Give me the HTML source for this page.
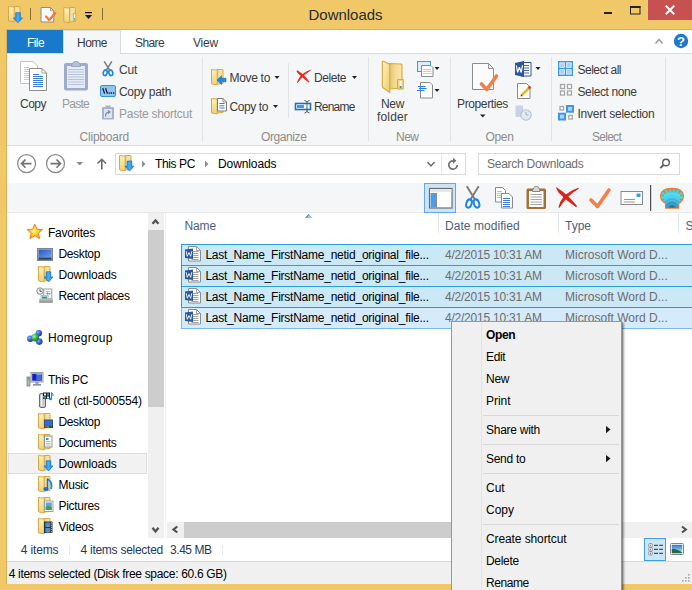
<!DOCTYPE html>
<html><head><meta charset="utf-8">
<style>
html,body{margin:0;padding:0;}
body{width:692px;height:590px;overflow:hidden;position:relative;background:#fff;font-family:"Liberation Sans",sans-serif;}
.a{position:absolute;}
.t{position:absolute;white-space:nowrap;font-family:"Liberation Sans",sans-serif;}
svg{position:absolute;overflow:visible;}
</style></head><body>
<!-- frame -->
<div class="a" style="left:0;top:0;width:692px;height:30px;background:#f0c868;"></div>
<div class="a" style="left:0;top:0;width:7px;height:590px;background:#f0c868;"></div>
<div class="a" style="left:0;top:583px;width:692px;height:7px;background:#f0c868;"></div>
<div class="a" style="left:6px;top:29px;width:686px;height:1px;background:#d9b158;"></div>
<div class="a" style="left:6px;top:29px;width:1px;height:555px;background:#d9b158;"></div>
<div class="a" style="left:6px;top:583px;width:686px;height:1px;background:#d9b158;"></div>
<!-- close button -->
<div class="a" style="left:648px;top:0;width:44px;height:20px;background:#c75050;"></div>
<!-- tab row -->
<div class="a" style="left:7px;top:30px;width:685px;height:23px;background:#fff;"></div>
<div class="a" style="left:7px;top:30px;width:56px;height:23px;background:#1979ca;"></div>
<div class="a" style="left:63px;top:30px;width:56px;height:24px;background:#f5f6f7;border:1px solid #dadbdc;border-bottom:none;"></div>
<!-- ribbon body -->
<div class="a" style="left:7px;top:53px;width:685px;height:91px;background:#f5f6f7;border-top:1px solid #dadbdc;border-bottom:1px solid #dadbdc;"></div>
<div class="a" style="left:64px;top:53px;width:56px;height:2px;background:#f5f6f7;"></div>
<!-- group separators -->
<div class="a" style="left:202px;top:57px;width:1px;height:84px;background:#e2e3e4;"></div>
<div class="a" style="left:288px;top:63px;width:1px;height:55px;background:#e2e3e4;"></div>
<div class="a" style="left:368px;top:57px;width:1px;height:84px;background:#e2e3e4;"></div>
<div class="a" style="left:450px;top:57px;width:1px;height:84px;background:#e2e3e4;"></div>
<div class="a" style="left:551px;top:57px;width:1px;height:84px;background:#e2e3e4;"></div>
<div class="a" style="left:665px;top:57px;width:1px;height:84px;background:#e2e3e4;"></div>
<!-- address row -->
<div class="a" style="left:7px;top:146px;width:685px;height:37px;background:#fff;"></div>
<div class="a" style="left:115px;top:153px;width:349px;height:20px;border:1px solid #d9d9d9;background:#fff;"></div>
<div class="a" style="left:441px;top:154px;width:1px;height:20px;background:#e5e5e5;"></div>
<div class="a" style="left:478px;top:153px;width:200px;height:20px;border:1px solid #d9d9d9;background:#fff;"></div>
<!-- toolbar row -->
<div class="a" style="left:7px;top:183px;width:685px;height:29px;background:#f5f6f7;border-bottom:1px solid #e8e9ea;"></div>
<div class="a" style="left:424px;top:183px;width:30px;height:28px;background:#cde4f7;border:1px solid #66a7e8;"></div>
<div class="a" style="left:650px;top:187px;width:1px;height:22px;background:#a0a0a0;"></div>
<!-- nav pane scrollbar -->
<div class="a" style="left:148px;top:213px;width:16px;height:325px;background:#f0f0f0;"></div>
<div class="a" style="left:148px;top:230px;width:16px;height:177px;background:#cdcdcd;"></div>
<div class="a" style="left:165px;top:213px;width:1px;height:325px;background:#f0f0f0;"></div>
<!-- nav hover row -->
<div class="a" style="left:8px;top:453px;width:137px;height:19px;background:#f2f2f2;border:1px solid #dedede;"></div>
<!-- header column lines -->
<div class="a" style="left:438px;top:213px;width:1px;height:23px;background:linear-gradient(#dfe6ee,#dfe6ee 70%,#fff);"></div>
<div class="a" style="left:558px;top:213px;width:1px;height:23px;background:linear-gradient(#dfe6ee,#dfe6ee 70%,#fff);"></div>
<div class="a" style="left:678px;top:213px;width:1px;height:23px;background:linear-gradient(#dfe6ee,#dfe6ee 70%,#fff);"></div>
<!-- selected rows -->
<div class="a" style="left:181px;top:244px;width:520px;height:20px;background:#cbe8f6;border:1px solid #26a0da;"></div>
<div class="a" style="left:181px;top:265px;width:520px;height:20px;background:#cbe8f6;border:1px solid #26a0da;"></div>
<div class="a" style="left:181px;top:286px;width:520px;height:20px;background:#cbe8f6;border:1px solid #26a0da;"></div>
<div class="a" style="left:181px;top:307px;width:520px;height:20px;background:#d5eafa;border:1px solid #7db8ea;border-top-color:#26a0da;"></div>
<!-- horizontal scrollbar -->
<div class="a" style="left:167px;top:522px;width:525px;height:16px;background:#f0f0f0;"></div>
<div class="a" style="left:184px;top:522px;width:438px;height:16px;background:#cdcdcd;"></div>
<!-- status bars -->
<div class="a" style="left:69px;top:545px;width:1px;height:10px;background:#e5e5e5;"></div>
<div class="a" style="left:222px;top:545px;width:1px;height:10px;background:#e5e5e5;"></div>
<div class="a" style="left:644px;top:538px;width:20px;height:21px;background:#cde6f7;border:1px solid #3fa0e0;"></div>
<div class="a" style="left:7px;top:561px;width:685px;height:22px;background:#f0f0f0;border-top:1px solid #d7d7d7;"></div>
<svg width="692" height="590" viewBox="0 0 692 590" style="left:0;top:0;">
<defs>
  <linearGradient id="fy" x1="0" y1="0" x2="0" y2="1">
    <stop offset="0" stop-color="#fcf2b8"/><stop offset="1" stop-color="#eed27c"/>
  </linearGradient>
  <linearGradient id="fb" x1="0" y1="0" x2="1" y2="0">
    <stop offset="0" stop-color="#dcc47a"/><stop offset="0.4" stop-color="#f2e2a4"/><stop offset="1" stop-color="#f4e2a0"/>
  </linearGradient>
  <symbol id="f16" viewBox="0 0 16 16" width="16" height="16" overflow="visible">
    <path d="M6.8 0.5 H12.5 Q13 0.5 13 1 V14.5 L6.8 15 Z" fill="url(#fb)" stroke="#d9a844" stroke-width="1"/>
    <path d="M1.5 0.5 L6.6 1.1 Q7.2 1.2 7.2 1.7 V15.8 L1.7 15 Q1.5 14.9 1.5 14.4 Z" fill="url(#fy)" stroke="#d9a844" stroke-width="1"/>
  </symbol>
  <linearGradient id="ar" x1="0" y1="0" x2="1" y2="0">
    <stop offset="0" stop-color="#1a78dc"/><stop offset="0.5" stop-color="#3fb2f6"/><stop offset="1" stop-color="#1a78dc"/>
  </linearGradient>
  <symbol id="dl" viewBox="0 0 10 10" width="10" height="10" overflow="visible">
    <path d="M2.2 0.2 H6.8 V5.4 H9 L4.5 10.3 L0 5.4 H2.2 Z" fill="url(#ar)" stroke="#1670d0" stroke-width="0.7" stroke-linejoin="round"/>
  </symbol>
  <radialGradient id="star" cx="0.45" cy="0.45" r="0.6">
    <stop offset="0" stop-color="#fff3a0"/><stop offset="0.45" stop-color="#ffd02a"/><stop offset="1" stop-color="#f59020"/>
  </radialGradient>
  <linearGradient id="scr" x1="0" y1="0" x2="1" y2="1">
    <stop offset="0" stop-color="#2a58c0"/><stop offset="1" stop-color="#6c9ce8"/>
  </linearGradient>
</defs>

<!-- ===== quick access toolbar ===== -->
<use href="#f16" x="7" y="6"/>
<use href="#dl" x="13.5" y="12.5"/>
<rect x="30" y="8" width="1" height="12" fill="#8a6f3a"/>
<path d="M41 7.5 H50.5 L53.8 10.8 V22 H41 Z" fill="#fbfbfb" stroke="#8a8a8a" stroke-width="1"/>
<path d="M50.5 7.5 V10.8 H53.8" fill="none" stroke="#8a8a8a" stroke-width="0.8"/>
<path d="M46 16.5 L49.3 20 L55.2 13" fill="none" stroke="#f07a40" stroke-width="2.4" stroke-linecap="round" stroke-linejoin="round"/>
<use href="#f16" x="62.3" y="7"/>
<rect x="73.3" y="13.5" width="2.6" height="7" fill="#f1d684" stroke="#d9a844" stroke-width="0.8"/>
<rect x="74.1" y="14.5" width="1" height="5" fill="#fff"/><rect x="74.1" y="18" width="1" height="1.6" fill="#3a9ae8"/>
<rect x="85" y="12" width="7" height="1.2" fill="#111"/>
<path d="M85 15 H92 L88.5 19 Z" fill="#111"/>
<rect x="102" y="8" width="1" height="12" fill="#8a6f3a"/>

<!-- window controls -->
<rect x="604" y="12" width="8" height="2" fill="#222"/>
<rect x="630.5" y="6.5" width="9.5" height="7.5" fill="none" stroke="#222" stroke-width="1"/>
<rect x="630" y="6" width="10.5" height="2" fill="#222"/>
<path d="M665.8 5.8 L674.2 14.2 M674.2 5.8 L665.8 14.2" stroke="#fff" stroke-width="2"/>
<!-- ribbon caret + help -->
<path d="M655.5 43.5 L659 39.5 L662.5 43.5" fill="none" stroke="#a0a0a0" stroke-width="1.6"/>
<circle cx="681" cy="41" r="7.2" fill="#1c78d0"/>
<text x="681" y="45.8" text-anchor="middle" font-family="Liberation Sans" font-weight="bold" font-size="13" fill="#fff">?</text>

<!-- ===== clipboard group ===== -->
<path d="M20.5 61.5 H33 L37.5 66 V83.5 H20.5 Z" fill="#fff" stroke="#c4c4c4" stroke-width="1"/>
<path d="M24 67.5 H29 M24 69.5 H31 M24 71.5 H31 M24 73.5 H31 M24 75.5 H31 M24 77.5 H31 M24 79.5 H31" stroke="#b9d0ec" stroke-width="1"/>
<path d="M29.5 68.5 H42 L46.5 73 V90.5 H29.5 Z" fill="#fff" stroke="#8c8c8c" stroke-width="1"/>
<path d="M42 68.5 V73 H46.5" fill="none" stroke="#8c8c8c" stroke-width="0.8"/>
<path d="M33 74.5 H39 M33 76.5 H43 M33 78.5 H43 M33 80.5 H43 M33 82.5 H43 M33 84.5 H43 M33 86.5 H43" stroke="#3a7bd5" stroke-width="1.1"/>
<rect x="64" y="63" width="24" height="27.5" rx="2" fill="#9eabc9"/>
<rect x="67" y="66" width="18" height="22" fill="#e6ecf7"/>
<path d="M68 69.5 H84 M68 72 H84 M68 74.5 H84 M68 77 H84 M68 79.5 H84 M68 82 H84 M68 84.5 H84" stroke="#b8c4dc" stroke-width="1"/>
<path d="M71.5 66.5 Q72 61.5 76 61.5 Q80 61.5 80.5 66.5 Z" fill="#b6c1d8" stroke="#8e9bb8" stroke-width="0.8"/>
<!-- scissors -->
<path d="M104.2 61.3 L109.6 70.2 M111.8 61.3 L106.4 70.2" stroke="#7a7a7a" stroke-width="1.5"/>
<ellipse cx="105.2" cy="72.8" rx="1.9" ry="2.9" fill="none" stroke="#1c86e0" stroke-width="1.6" transform="rotate(15 105.2 72.8)"/>
<ellipse cx="110.8" cy="72.8" rx="1.9" ry="2.9" fill="none" stroke="#1c86e0" stroke-width="1.6" transform="rotate(-15 110.8 72.8)"/>
<!-- copy path -->
<rect x="100.5" y="85.5" width="15" height="11" rx="1.5" fill="#8fc5f5" stroke="#3a8ee0" stroke-width="1"/>
<path d="M102.8 88.3 L104.6 93.6 M105.6 88.3 L107.4 93.6" stroke="#111" stroke-width="1.2"/>
<path d="M108.6 93 H109.8 M110.8 93 H112 M113 93 H114.2" stroke="#111" stroke-width="1.4"/>
<!-- paste shortcut -->
<rect x="102" y="107" width="12" height="12.5" rx="1" fill="#a9b4ca"/>
<rect x="104" y="109" width="8" height="9" fill="#dfe5f0"/>
<rect x="105.5" y="105.5" width="5" height="2.5" fill="#a9b4ca"/>
<path d="M105.5 116.5 Q105.5 112 109.5 112 M108 110.5 L110 112 L108 113.5" fill="none" stroke="#7c8aa8" stroke-width="1.2"/>

<!-- ===== organize ===== -->
<use href="#f16" x="210" y="69" />
<path d="M217 80 L221.5 75.8 V78.3 H226 V81.8 H221.5 V84.5 Z" fill="#1e8ae6" stroke="#0f6cc0" stroke-width="0.6"/>
<use href="#f16" x="210" y="98" />
<path d="M217.5 98.5 H223 L226.5 102 V111 H217.5 Z" fill="#fff" stroke="#7a7a7a" stroke-width="1"/>
<path d="M223 98.5 V102 H226.5" fill="none" stroke="#7a7a7a" stroke-width="0.8"/>
<path d="M219.5 103.5 H224.5 M219.5 105.8 H224.5 M219.5 108 H224.5" stroke="#3a7bd5" stroke-width="1"/>
<path d="M274.5 76 H279.5 L277 79 Z" fill="#222"/>
<path d="M273 105 H278 L275.5 108 Z" fill="#222"/>
<path d="M310.3 70.2 Q303 74.5 297.5 82.5 Q298.5 79 301 76 Q305 72 310.3 70.2 Z" fill="#e0302a" stroke="#e0302a" stroke-width="1"/>
<path d="M297 70.8 Q303.5 74.5 309 82 Q303 77.5 298.5 73 Z" fill="#e0302a" stroke="#e0302a" stroke-width="1.2"/>
<path d="M352 76 H357 L354.5 79 Z" fill="#222"/>
<rect x="295.5" y="103.5" width="15" height="6" fill="#fff" stroke="#1e6ec0" stroke-width="1.6"/>
<rect x="297" y="105" width="7" height="3" fill="#3a9ae8"/>
<path d="M304.5 100.5 Q307 101 307 102.5 V111 Q307 112.5 304.5 113 M309.5 100.5 Q307 101 307 102.5 M307 111 Q307 112.5 309.5 113" fill="none" stroke="#5a5a5a" stroke-width="1"/>

<!-- ===== new ===== -->
<defs><linearGradient id="nfb" x1="0" y1="0" x2="1" y2="0"><stop offset="0" stop-color="#e2c470"/><stop offset="0.5" stop-color="#f2dc96"/><stop offset="1" stop-color="#f8e8aa"/></linearGradient>
<linearGradient id="nff" x1="0" y1="0" x2="1" y2="1"><stop offset="0" stop-color="#fdf3bc"/><stop offset="1" stop-color="#eccc70"/></linearGradient></defs>
<path d="M389 63.5 L401 64 Q402 64.2 402 65.2 V88 L389 89 Z" fill="url(#nfb)" stroke="#dca53a" stroke-width="1.1"/>
<path d="M397.5 79.5 H403.3 V89 H397.5 Z" fill="#f1d684" stroke="#dca53a" stroke-width="1"/>
<rect x="399.6" y="81" width="2" height="7" fill="#fafafa"/>
<rect x="399.6" y="86" width="2" height="2.2" fill="#3a8ee0"/>
<path d="M382.3 62 Q382.5 61 383.5 61.3 L389.2 64 Q389.8 64.3 389.8 65 V92.5 L382.8 87.5 Q382.3 87.2 382.3 86.5 Z" fill="url(#nff)" stroke="#dca53a" stroke-width="1.1"/>
<!-- new item -->
<rect x="417.5" y="61.5" width="13" height="10" fill="#dcecfb" stroke="#3a9ae8" stroke-width="1"/>
<path d="M421.5 65.5 H431 L433 67.5 V76.5 H421.5 Z" fill="#fff" stroke="#8a8a8a" stroke-width="1"/>
<path d="M423 69.5 H431.5 M423 71.5 H431.5 M423 73.5 H431.5" stroke="#b8cce4" stroke-width="0.9"/>
<path d="M434.5 67 H439.5 L437 70 Z" fill="#222"/>
<!-- easy access -->
<path d="M420.5 82.5 H430 L432.5 85 V98 H420.5 Z" fill="#fff" stroke="#8a8a8a" stroke-width="1"/>
<path d="M418 86.5 H425.5 M419 88.5 H426.5 M417 90.5 H424.5" stroke="#2a7de0" stroke-width="1.1"/>
<path d="M434.5 89 H439.5 L437 92 Z" fill="#222"/>

<!-- ===== open ===== -->
<path d="M472.5 63.5 H488.5 L493.5 68.5 V89.5 H472.5 Z" fill="#fcfcfc" stroke="#8c8c8c" stroke-width="1"/>
<path d="M488.5 63.5 V68.5 H493.5" fill="none" stroke="#8c8c8c" stroke-width="0.9"/>
<path d="M481.5 84 L486.8 89.5 L496.5 76" fill="none" stroke="#f08048" stroke-width="3.6" stroke-linecap="round" stroke-linejoin="round"/>
<path d="M480 114.5 H485.5 L482.75 117.5 Z" fill="#222"/>
<!-- word -->
<path d="M521 62.5 H531 V76 H521 Z" fill="#fff" stroke="#2b579a" stroke-width="1"/>
<path d="M524 65.5 H529 M524 68 H529 M524 70.5 H529 M524 73 H529" stroke="#2b579a" stroke-width="0.9"/>
<path d="M515 63 L524 61 V77 L515 75 Z" fill="#2b579a"/>
<path d="M516.3 65.3 L517.6 72.5 L519.4 67.3 L521.2 72.5 L522.5 65.3" fill="none" stroke="#fff" stroke-width="1.2" stroke-linejoin="bevel"/>
<path d="M535.5 67 H540.5 L538 70 Z" fill="#222"/>
<!-- edit -->
<path d="M517.5 83.5 H526.5 L530 87 V98.5 H517.5 Z" fill="#fff" stroke="#8a8a8a" stroke-width="1"/>
<path d="M521 96 L529.5 87.5" stroke="#e8b820" stroke-width="2.6"/>
<path d="M528.5 86.5 L530.5 88.5" stroke="#d84040" stroke-width="2.6"/>
<path d="M520.5 96.5 L521.5 94.5 L522.5 95.5 Z" fill="#333"/>
<!-- history disabled -->
<path d="M515.5 105.5 H523 V117 H515.5 Z" fill="#c9d3e3"/>
<circle cx="526" cy="115" r="5.2" fill="#e4e9f2" stroke="#b2bfd3" stroke-width="1.1"/>
<path d="M526 111.8 V115 H528.5" fill="none" stroke="#9aaac4" stroke-width="1"/>

<!-- ===== select ===== -->
<rect x="558" y="61" width="15" height="15" fill="#3b98ea"/>
<rect x="559.8" y="62.8" width="4.6" height="4.6" fill="#a8d4f8" stroke="#e8f4fe" stroke-width="0.8"/>
<rect x="566.6" y="62.8" width="4.6" height="4.6" fill="#a8d4f8" stroke="#e8f4fe" stroke-width="0.8"/>
<rect x="559.8" y="69.6" width="4.6" height="4.6" fill="#a8d4f8" stroke="#e8f4fe" stroke-width="0.8"/>
<rect x="566.6" y="69.6" width="4.6" height="4.6" fill="#a8d4f8" stroke="#e8f4fe" stroke-width="0.8"/>
<rect x="560.5" y="84.5" width="4" height="4" fill="#fff" stroke="#a6a6a6" stroke-width="1.3"/>
<rect x="567.5" y="84.5" width="4" height="4" fill="#fff" stroke="#a6a6a6" stroke-width="1.3"/>
<rect x="560.5" y="91" width="4" height="4" fill="#fff" stroke="#a6a6a6" stroke-width="1.3"/>
<rect x="567.5" y="91" width="4" height="4" fill="#fff" stroke="#a6a6a6" stroke-width="1.3"/>
<rect x="560" y="106.5" width="3.5" height="3.5" fill="#fff" stroke="#a6a6a6" stroke-width="1.3"/>
<rect x="566" y="105" width="8" height="7.7" fill="#3b98ea"/>
<rect x="568" y="107" width="4" height="3.7" fill="#a8d4f8"/>
<rect x="558" y="112.7" width="8" height="7.8" fill="#3b98ea"/>
<rect x="560" y="114.7" width="4" height="3.8" fill="#a8d4f8"/>
<rect x="568.8" y="115.5" width="3.5" height="3.5" fill="#fff" stroke="#a6a6a6" stroke-width="1.3"/>

<!-- ===== address row ===== -->
<circle cx="26.6" cy="163.6" r="9" fill="none" stroke="#8c8c8c" stroke-width="1.3"/>
<path d="M21.5 163.6 H31.5 M25.5 159.5 L21.5 163.6 L25.5 167.7" fill="none" stroke="#707070" stroke-width="1.6"/>
<circle cx="55.5" cy="163.6" r="9" fill="none" stroke="#8c8c8c" stroke-width="1.3"/>
<path d="M50.5 163.6 H60.5 M56.5 159.5 L60.5 163.6 L56.5 167.7" fill="none" stroke="#707070" stroke-width="1.6"/>
<path d="M76.5 162 H83 L79.75 165.5 Z" fill="#8a8a8a"/>
<path d="M101.8 169.5 V159.5 M97.5 163.5 L101.8 159.3 L106 163.5" fill="none" stroke="#6a6a6a" stroke-width="1.6"/>
<use href="#f16" x="118" y="155"/>
<use href="#dl" x="125" y="160.8"/>
<path d="M142 160.5 L145.5 164 L142 167.5 Z" fill="#909090"/>
<path d="M205 160.5 L208.5 164 L205 167.5 Z" fill="#909090"/>
<path d="M427.5 162 L431 166 L434.5 162" fill="none" stroke="#6a6a6a" stroke-width="1.4"/>
<path d="M457.2 165 A4.2 4.2 0 1 1 453.2 160.8" fill="none" stroke="#707070" stroke-width="1.7"/>
<path d="M453 157.8 L456.4 160.8 L453 163.8 Z" fill="#707070"/>
<circle cx="666" cy="162.5" r="3.3" fill="none" stroke="#5a5a5a" stroke-width="1.4"/>
<path d="M663.5 165 L660.3 168.2" stroke="#5a5a5a" stroke-width="1.8"/>

<!-- ===== toolbar ===== -->
<rect x="429.5" y="188.5" width="22.5" height="19.5" fill="#fff" stroke="#6e6e6e" stroke-width="1.2"/>
<rect x="430" y="189" width="21.5" height="3" fill="#e8e8e8"/>
<rect x="430.5" y="193" width="5.5" height="14.5" fill="#4a9de8"/>
<path d="M436.5 193 V208" stroke="#8a8a8a" stroke-width="1"/>
<path d="M466.8 186.3 L475 199.5 M478.7 186.3 L470.5 199.5" stroke="#7a7a7a" stroke-width="1.9"/>
<ellipse cx="469" cy="203.5" rx="2.6" ry="4.2" fill="none" stroke="#1c86e0" stroke-width="2" transform="rotate(18 469 203.5)"/>
<ellipse cx="476.5" cy="203.5" rx="2.6" ry="4.2" fill="none" stroke="#1c86e0" stroke-width="2" transform="rotate(-18 476.5 203.5)"/>
<path d="M495.5 187.5 H502.5 L505.5 190.5 V202 H495.5 Z" fill="#fff" stroke="#8a8a8a" stroke-width="1"/>
<path d="M497 191.5 H502 M497 193.5 H502 M497 195.5 H502 M497 197.5 H502" stroke="#aac4e8" stroke-width="1"/>
<path d="M501.5 193.5 H509 L512.5 197 V208 H501.5 Z" fill="#fff" stroke="#8a8a8a" stroke-width="1"/>
<path d="M503 198.5 H510 M503 200.5 H510 M503 202.5 H510 M503 204.5 H510 M503 206.5 H510" stroke="#3a7bd5" stroke-width="1"/>
<rect x="526.5" y="188.5" width="19.5" height="20.5" rx="1.5" fill="#a56f36"/>
<rect x="529" y="191" width="14.5" height="16" fill="#fff"/>
<path d="M530.5 194.5 H542 M530.5 197 H542 M530.5 199.5 H542 M530.5 202 H542 M530.5 204.5 H542" stroke="#9a9a9a" stroke-width="0.9"/>
<path d="M532.5 191.5 Q533 186.5 536.25 186.5 Q539.5 186.5 540 191.5 Z" fill="#d8d8d8" stroke="#7a7a7a" stroke-width="0.9"/>
<path d="M578.5 188.2 Q567 194.5 559 207.5 Q560 202 564 197 Q570 191 578.5 188.2 Z" fill="#d8261c" stroke="#d8261c" stroke-width="1.2"/>
<path d="M557.5 189 Q567 195 576.5 206.5 Q567 200.5 559 192 Z" fill="#d8261c" stroke="#d8261c" stroke-width="1.5"/>
<path d="M591 200 L597.5 206.5 L609 190" fill="none" stroke="#f08048" stroke-width="3.6" stroke-linecap="round" stroke-linejoin="round"/>
<rect x="621" y="191.5" width="21.5" height="13" fill="#fff" stroke="#8a8a8a" stroke-width="1"/>
<rect x="636.5" y="193.5" width="4" height="3.5" fill="#3aa0d8"/>
<path d="M624 199.5 H635 M624 202 H635" stroke="#8a8a8a" stroke-width="0.9"/>
<rect x="650" y="185" width="1.2" height="26" fill="#505050"/>
<defs><radialGradient id="shg" cx="672" cy="208" r="20" gradientUnits="userSpaceOnUse">
<stop offset="0" stop-color="#2a5e9a"/><stop offset="0.35" stop-color="#3aa6d6"/><stop offset="0.7" stop-color="#4de0f2"/><stop offset="1" stop-color="#3cc8e0"/></radialGradient></defs>
<path d="M665 208.8 V203.8 Q659.8 201 660 195.5 Q660.5 187.8 672 187.8 Q683.5 187.8 684 195.5 Q684.2 201 679.3 203.8 V208.8 Z" fill="#f07a2a"/>
<path d="M666 207.8 V203.2 Q661 200.5 661.1 195.6 Q661.6 189 672 189 Q682.4 189 682.9 195.6 Q683 200.5 678.3 203.2 V207.8 Z" fill="url(#shg)"/>
<g stroke="#f07a2a" stroke-width="1.3" stroke-linecap="round">
<path d="M672 189 V191.5"/><path d="M668 189.5 L668.7 191.8"/><path d="M676 189.5 L675.3 191.8"/><path d="M664.2 191.5 L665.6 193.3"/><path d="M679.8 191.5 L678.4 193.3"/><path d="M661.8 195 L663.6 196"/><path d="M682.2 195 L680.4 196"/><path d="M661.5 199.5 L663.5 199.6"/><path d="M682.5 199.5 L680.5 199.6"/>
</g>
<path d="M667.5 207 Q672 201 676.5 207" fill="none" stroke="#5fd0f0" stroke-width="0.8" opacity="0.7"/>
<path d="M665.5 204.5 Q672 196 678.5 204.5" fill="none" stroke="#6ae8f8" stroke-width="0.8" opacity="0.6"/>
<path d="M663.5 201.5 Q672 192 680.5 201.5" fill="none" stroke="#7af0fa" stroke-width="0.8" opacity="0.5"/>
<!-- ===== nav pane ===== -->
<path d="M152.5 223.8 L155.5 220.5 L158.5 223.8" fill="none" stroke="#505050" stroke-width="2.2"/>
<path d="M152.5 527.8 L155.5 531.5 L158.5 527.8" fill="none" stroke="#505050" stroke-width="2.2"/>
<path d="M177.3 526.5 L173.5 529.5 L177.3 532.5" fill="none" stroke="#505050" stroke-width="2.2"/>
<path d="M682 526.5 L685.8 529.5 L682 532.5" fill="none" stroke="#505050" stroke-width="2.2"/>
<path d="M34.75 224.3 L37 229.2 L42.4 229.6 L38.3 233.2 L39.6 238.5 L34.75 235.7 L29.9 238.5 L31.2 233.2 L27.1 229.6 L32.5 229.2 Z" fill="url(#star)" stroke="#ee7f18" stroke-width="1" stroke-linejoin="round"/>
<rect x="37.5" y="248.5" width="15" height="12" fill="#9aa6b8" stroke="#7a8698" stroke-width="1"/>
<rect x="38.8" y="249.8" width="12.4" height="7.2" fill="url(#scr)"/>
<rect x="38.5" y="257.5" width="13" height="2.2" fill="#34415a"/>
<use href="#f16" x="37" y="266"/>
<use href="#dl" x="44" y="271.6"/>
<!-- recent places -->
<rect x="43.8" y="289" width="8" height="9.5" fill="#fff" stroke="#9a9a9a" stroke-width="1"/>
<path d="M45.5 291.5 H50 M45.5 293.5 H46.5" stroke="#b0b0b0" stroke-width="0.8"/>
<circle cx="47.6" cy="293.6" r="1" fill="#2a7ae8"/><circle cx="49.6" cy="293.8" r="0.9" fill="#3aa0f0"/>
<rect x="41" y="295.5" width="7.2" height="4" fill="#e8f2fa" stroke="#a0a8b0" stroke-width="0.7"/>
<rect x="42" y="296.5" width="5.2" height="2.4" fill="#3a8ac8"/>
<rect x="42" y="297.8" width="5.2" height="1.1" fill="#3a9a50"/>
<defs><linearGradient id="tray" x1="0" y1="0" x2="0" y2="1"><stop offset="0" stop-color="#c8c8c8"/><stop offset="1" stop-color="#8a8a8a"/></linearGradient></defs>
<rect x="39.2" y="298.5" width="13.7" height="4.3" fill="url(#tray)"/>
<circle cx="40" cy="291" r="3.2" fill="#eef4f6" stroke="#8a8a8a" stroke-width="1"/>
<path d="M40 289 V291.4 H41.8" fill="none" stroke="#404a58" stroke-width="0.9"/>
<!-- homegroup -->
<defs><radialGradient id="bb" cx="0.35" cy="0.35" r="0.7"><stop offset="0" stop-color="#8fb4ff"/><stop offset="0.5" stop-color="#3a64d8"/><stop offset="1" stop-color="#1c3a9a"/></radialGradient>
<radialGradient id="gb" cx="0.35" cy="0.35" r="0.7"><stop offset="0" stop-color="#b8f0b0"/><stop offset="0.5" stop-color="#3cb04a"/><stop offset="1" stop-color="#1a7030"/></radialGradient></defs>
<path d="M30 338.5 L35.5 337.5 L38.5 333 M35.5 337.5 L39.3 341.5" stroke="#9ab8e8" stroke-width="1.2"/>
<circle cx="30.3" cy="338.7" r="3.2" fill="url(#bb)"/>
<circle cx="38.8" cy="333.2" r="3.2" fill="url(#bb)"/>
<circle cx="39.3" cy="341.6" r="3.3" fill="url(#bb)"/>
<circle cx="35.2" cy="337.6" r="3.9" fill="url(#gb)"/>
<!-- this pc -->
<rect x="31" y="372.5" width="12" height="9.5" fill="#d8d8d0" stroke="#9a9a94" stroke-width="0.9"/>
<rect x="32.2" y="373.7" width="9.6" height="7" fill="#1020c8"/>
<rect x="36.3" y="374" width="5.2" height="1.5" fill="#7aa0f0"/>
<rect x="36.3" y="375.5" width="5.2" height="4.8" fill="#4a68d8"/>
<rect x="35.5" y="382" width="3" height="2" fill="#9aa0a8"/>
<rect x="33" y="384" width="8" height="1.6" fill="#8a9098"/>
<rect x="27" y="377" width="3" height="9" fill="#b8b8b8" stroke="#707070" stroke-width="0.7"/>
<rect x="27.8" y="378" width="1.4" height="1.4" fill="#30c030"/>
<!-- ctl -->
<rect x="39.5" y="393.5" width="6" height="14" rx="1.5" fill="#c9c9c9" stroke="#6c6c6c" stroke-width="1"/>
<rect x="41" y="395" width="1.2" height="11" fill="#f8f8f8"/>
<rect x="43" y="392.5" width="7" height="6.5" fill="#202020"/>
<rect x="44" y="393.5" width="2" height="2" fill="#e8f0f0"/><rect x="47" y="393.5" width="2" height="2" fill="#3a9ae0"/>
<rect x="44" y="396.5" width="2" height="2" fill="#3a9ae0"/><rect x="47" y="396.5" width="2" height="2" fill="#e8f0f0"/>
<rect x="43" y="396" width="1.5" height="1.5" fill="#40c040"/>
<path d="M51.5 392.5 V398.5" stroke="#1e8ae6" stroke-width="1.2"/>
<path d="M51.5 392.5 Q53.5 394 53 396" fill="none" stroke="#1e8ae6" stroke-width="1"/>
<ellipse cx="50.6" cy="399" rx="1.6" ry="1.2" fill="#1e8ae6"/>
<!-- library folders -->
<use href="#f16" x="37" y="413"/>
<rect x="44" y="419.5" width="9" height="8.5" fill="#404850"/>
<rect x="44.8" y="420.3" width="7.4" height="5.6" fill="#2a6ed8"/>
<rect x="44.8" y="426" width="2" height="1.5" fill="#d04040"/>
<rect x="47" y="426" width="2" height="1.5" fill="#40b040"/>
<use href="#f16" x="37" y="434"/>
<rect x="44.5" y="436" width="7.5" height="11" fill="#fff" stroke="#8a8a8a" stroke-width="0.9"/>
<rect x="46" y="438" width="2.5" height="2" fill="#3a8ee0"/>
<path d="M46 441.5 H50.5 M46 443.3 H50.5 M46 445 H50.5" stroke="#9a9a9a" stroke-width="0.7"/>
<use href="#f16" x="37" y="455"/>
<use href="#dl" x="44" y="460.6"/>
<use href="#f16" x="37" y="476"/>
<path d="M47.5 479 Q53 482 51 489" fill="none" stroke="#1e8ae6" stroke-width="1.8"/>
<path d="M47.5 478.5 V489" stroke="#1e6ec8" stroke-width="1.5"/>
<ellipse cx="46" cy="489" rx="2.6" ry="2.1" fill="#1e6ec8"/>
<use href="#f16" x="37" y="497"/>
<rect x="44.5" y="501" width="8.5" height="10.5" fill="#fafafa" stroke="#9a9a9a" stroke-width="0.9"/>
<rect x="45.7" y="502.5" width="6.1" height="7.5" fill="#58a8e0"/>
<path d="M45.7 507 Q48 505 51.8 507.5 V510 H45.7 Z" fill="#4a9a50"/>
<use href="#f16" x="37" y="518"/>
<rect x="44" y="521.5" width="8.5" height="11.5" fill="#303438"/>
<rect x="45.3" y="522.5" width="5" height="4.5" fill="#4a8ec8"/>
<rect x="45.3" y="528" width="5" height="4.5" fill="#4a8ec8"/>
<rect x="47" y="525" width="1.6" height="2" fill="#e07a20"/>
<rect x="47" y="530.5" width="1.6" height="2" fill="#e07a20"/>
<path d="M51.5 522.5 V533" stroke="#ddd" stroke-width="0.9" stroke-dasharray="1 1.2"/>

<!-- sort arrow -->
<path d="M305.5 218 L309 214.2 L312.5 218 Z" fill="#8cc0e8"/>
<path d="M305.5 218 L309 214.2" stroke="#3a5e80" stroke-width="0.9"/>

<!-- file rows word icons -->
<g id="wd">
<path d="M188.5 246.5 H196.5 L200.5 250.5 V261 H188.5 Z" fill="#fff" stroke="#8c8c8c" stroke-width="1"/>
<path d="M196.5 246.5 V250.5 H200.5" fill="none" stroke="#8c8c8c" stroke-width="0.8"/>
<path d="M191.5 251.5 H198.5 M191.5 253.5 H198.5 M191.5 255.5 H198.5 M191.5 257.5 H198.5 M191.5 259.5 H198.5" stroke="#8c8c8c" stroke-width="0.8"/>
<path d="M185 249.5 L193 248.5 V259 L185 258 Z" fill="#2b579a"/>
<path d="M186.2 251.2 L187.3 256.3 L189 252.5 L190.7 256.3 L191.8 251.2" fill="none" stroke="#fff" stroke-width="0.9"/>
</g>
<use href="#wd" y="21"/>
<use href="#wd" y="42"/>
<use href="#wd" y="63"/>

<!-- view buttons -->
<g stroke="#7a7a7a" stroke-width="0.8" fill="#fff">
<rect x="648.8" y="543.6" width="3.4" height="3.4" rx="0.6"/>
<rect x="648.8" y="547.6" width="3.4" height="3.4" rx="0.6"/>
<rect x="648.8" y="551.6" width="3.4" height="3.4" rx="0.6"/>
</g>
<rect x="650" y="544.8" width="1" height="1" fill="#3a9a40"/>
<rect x="650" y="548.8" width="1" height="1" fill="#e02020"/>
<rect x="650" y="552.8" width="1" height="1" fill="#2050d0"/>
<path d="M654 545.4 H658 M659.2 545.4 H663 M654 549.4 H658 M659.2 549.4 H663 M654 553.4 H658 M659.2 553.4 H663" stroke="#505050" stroke-width="1.3"/>
<rect x="670.5" y="543.5" width="13" height="11" rx="1" fill="#fff" stroke="#7c8494" stroke-width="1"/>
<defs><linearGradient id="sky" x1="0" y1="0" x2="0" y2="1"><stop offset="0" stop-color="#2a7ad0"/><stop offset="1" stop-color="#bfe4f8"/></linearGradient></defs>
<rect x="671.8" y="544.8" width="10.4" height="8.4" fill="url(#sky)"/>
<path d="M671.8 549 Q675 548 682.2 552.5 V553.2 H671.8 Z" fill="#2a6a3a"/>
<!-- resize grip -->
<g fill="#a8a8a8">
<rect x="688" y="574" width="1.6" height="1.6"/>
<rect x="685" y="577" width="1.6" height="1.6"/><rect x="688" y="577" width="1.6" height="1.6"/>
<rect x="682" y="580" width="1.6" height="1.6"/><rect x="685" y="580" width="1.6" height="1.6"/><rect x="688" y="580" width="1.6" height="1.6"/>
</g>
</svg>

<div class="t" style="left:308.5px;top:6px;font-size:15px;line-height:18px;color:#2b2b2b;font-weight:normal;letter-spacing:-0.023px;">Downloads</div>
<div class="t" style="left:27.0px;top:36px;font-size:12px;line-height:14px;color:#fff;font-weight:normal;letter-spacing:-0.584px;">File</div>
<div class="t" style="left:77.0px;top:36px;font-size:12px;line-height:14px;color:#3b3b3b;font-weight:normal;letter-spacing:-0.502px;">Home</div>
<div class="t" style="left:135.0px;top:36px;font-size:12px;line-height:14px;color:#3b3b3b;font-weight:normal;letter-spacing:-0.604px;">Share</div>
<div class="t" style="left:193.0px;top:36px;font-size:12px;line-height:14px;color:#3b3b3b;font-weight:normal;letter-spacing:-0.198px;">View</div>
<div class="t" style="left:20.0px;top:97px;font-size:12px;line-height:14px;color:#3b3b3b;font-weight:normal;letter-spacing:-0.503px;">Copy</div>
<div class="t" style="left:62.0px;top:97px;font-size:12px;line-height:14px;color:#9a9a9a;font-weight:normal;letter-spacing:-0.737px;">Paste</div>
<div class="t" style="left:119.0px;top:63px;font-size:12px;line-height:14px;color:#3b3b3b;font-weight:normal;letter-spacing:-0.225px;">Cut</div>
<div class="t" style="left:119.0px;top:85px;font-size:12px;line-height:14px;color:#3b3b3b;font-weight:normal;letter-spacing:-0.300px;">Copy path</div>
<div class="t" style="left:119.0px;top:107px;font-size:12px;line-height:14px;color:#9a9a9a;font-weight:normal;letter-spacing:-0.265px;">Paste shortcut</div>
<div class="t" style="left:79.5px;top:130px;font-size:12px;line-height:14px;color:#8d8d8d;font-weight:normal;letter-spacing:-0.207px;">Clipboard</div>
<div class="t" style="left:229.5px;top:71px;font-size:12px;line-height:14px;color:#3b3b3b;font-weight:normal;letter-spacing:-0.312px;">Move to</div>
<div class="t" style="left:229.5px;top:100px;font-size:12px;line-height:14px;color:#3b3b3b;font-weight:normal;letter-spacing:-0.408px;">Copy to</div>
<div class="t" style="left:314.0px;top:71px;font-size:12px;line-height:14px;color:#3b3b3b;font-weight:normal;letter-spacing:-0.448px;">Delete</div>
<div class="t" style="left:314.0px;top:100px;font-size:12px;line-height:14px;color:#3b3b3b;font-weight:normal;letter-spacing:-0.810px;">Rename</div>
<div class="t" style="left:261.0px;top:130px;font-size:12px;line-height:14px;color:#8d8d8d;font-weight:normal;letter-spacing:-0.399px;">Organize</div>
<div class="t" style="left:381.0px;top:97px;font-size:12px;line-height:14px;color:#3b3b3b;font-weight:normal;letter-spacing:-0.335px;">New</div>
<div class="t" style="left:377.0px;top:110px;font-size:12px;line-height:14px;color:#3b3b3b;font-weight:normal;letter-spacing:0.164px;">folder</div>
<div class="t" style="left:396.0px;top:130px;font-size:12px;line-height:14px;color:#8d8d8d;font-weight:normal;letter-spacing:-0.502px;">New</div>
<div class="t" style="left:457.0px;top:97px;font-size:12px;line-height:14px;color:#3b3b3b;font-weight:normal;letter-spacing:-0.369px;">Properties</div>
<div class="t" style="left:485.5px;top:130px;font-size:12px;line-height:14px;color:#8d8d8d;font-weight:normal;letter-spacing:-0.339px;">Open</div>
<div class="t" style="left:577.5px;top:63px;font-size:12px;line-height:14px;color:#3b3b3b;font-weight:normal;letter-spacing:-0.519px;">Select all</div>
<div class="t" style="left:577.5px;top:85px;font-size:12px;line-height:14px;color:#3b3b3b;font-weight:normal;letter-spacing:-0.398px;">Select none</div>
<div class="t" style="left:577.5px;top:107px;font-size:12px;line-height:14px;color:#3b3b3b;font-weight:normal;letter-spacing:-0.232px;">Invert selection</div>
<div class="t" style="left:592.0px;top:130px;font-size:12px;line-height:14px;color:#8d8d8d;font-weight:normal;letter-spacing:-0.725px;">Select</div>
<div class="t" style="left:155.0px;top:157px;font-size:12px;line-height:14px;color:#000;font-weight:normal;letter-spacing:-0.382px;">This PC</div>
<div class="t" style="left:218.0px;top:157px;font-size:12px;line-height:14px;color:#000;font-weight:normal;letter-spacing:-0.096px;">Downloads</div>
<div class="t" style="left:487.0px;top:157px;font-size:12px;line-height:14px;color:#6d6d6d;font-weight:normal;letter-spacing:-0.264px;">Search Downloads</div>
<div class="t" style="left:48.0px;top:226px;font-size:12px;line-height:14px;color:#000;font-weight:normal;letter-spacing:-0.261px;">Favorites</div>
<div class="t" style="left:58.5px;top:247px;font-size:12px;line-height:14px;color:#000;font-weight:normal;letter-spacing:-0.360px;">Desktop</div>
<div class="t" style="left:58.5px;top:268px;font-size:12px;line-height:14px;color:#000;font-weight:normal;letter-spacing:-0.152px;">Downloads</div>
<div class="t" style="left:58.5px;top:289px;font-size:12px;line-height:14px;color:#000;font-weight:normal;letter-spacing:-0.388px;">Recent places</div>
<div class="t" style="left:48.0px;top:331px;font-size:12px;line-height:14px;color:#000;font-weight:normal;letter-spacing:0.200px;">Homegroup</div>
<div class="t" style="left:48.0px;top:373px;font-size:12px;line-height:14px;color:#000;font-weight:normal;letter-spacing:-0.382px;">This PC</div>
<div class="t" style="left:58.5px;top:394px;font-size:12px;line-height:14px;color:#000;font-weight:normal;letter-spacing:-0.161px;">ctl (ctl-5000554)</div>
<div class="t" style="left:58.5px;top:415px;font-size:12px;line-height:14px;color:#000;font-weight:normal;letter-spacing:-0.360px;">Desktop</div>
<div class="t" style="left:58.5px;top:436px;font-size:12px;line-height:14px;color:#000;font-weight:normal;letter-spacing:-0.299px;">Documents</div>
<div class="t" style="left:58.5px;top:457px;font-size:12px;line-height:14px;color:#000;font-weight:normal;letter-spacing:-0.152px;">Downloads</div>
<div class="t" style="left:58.5px;top:478px;font-size:12px;line-height:14px;color:#000;font-weight:normal;letter-spacing:-0.267px;">Music</div>
<div class="t" style="left:58.5px;top:499px;font-size:12px;line-height:14px;color:#000;font-weight:normal;letter-spacing:-0.293px;">Pictures</div>
<div class="t" style="left:58.5px;top:520px;font-size:12px;line-height:14px;color:#000;font-weight:normal;letter-spacing:-0.246px;">Videos</div>
<div class="t" style="left:184.5px;top:219px;font-size:12px;line-height:14px;color:#4c607a;font-weight:normal;letter-spacing:-0.127px;">Name</div>
<div class="t" style="left:445.0px;top:219px;font-size:12px;line-height:14px;color:#4c607a;font-weight:normal;letter-spacing:0.051px;">Date modified</div>
<div class="t" style="left:565.0px;top:219px;font-size:12px;line-height:14px;color:#4c607a;font-weight:normal;letter-spacing:-0.004px;">Type</div>
<div class="t" style="left:685.5px;top:219px;font-size:12px;line-height:14px;color:#4c607a;font-weight:normal;letter-spacing:0.000px;">S</div>
<div class="t" style="left:205.4px;top:248px;font-size:12px;line-height:14px;color:#000;font-weight:normal;letter-spacing:-0.239px;">Last_Name_FirstName_netid_original_file...</div>
<div class="t" style="left:445.0px;top:248px;font-size:12px;line-height:14px;color:#6d6d6d;font-weight:normal;letter-spacing:-0.230px;">4/2/2015 10:31 AM</div>
<div class="t" style="left:565.0px;top:248px;font-size:12px;line-height:14px;color:#6d6d6d;font-weight:normal;letter-spacing:0.018px;">Microsoft Word D...</div>
<div class="t" style="left:205.4px;top:269px;font-size:12px;line-height:14px;color:#000;font-weight:normal;letter-spacing:-0.239px;">Last_Name_FirstName_netid_original_file...</div>
<div class="t" style="left:445.0px;top:269px;font-size:12px;line-height:14px;color:#6d6d6d;font-weight:normal;letter-spacing:-0.230px;">4/2/2015 10:31 AM</div>
<div class="t" style="left:565.0px;top:269px;font-size:12px;line-height:14px;color:#6d6d6d;font-weight:normal;letter-spacing:0.018px;">Microsoft Word D...</div>
<div class="t" style="left:205.4px;top:290px;font-size:12px;line-height:14px;color:#000;font-weight:normal;letter-spacing:-0.239px;">Last_Name_FirstName_netid_original_file...</div>
<div class="t" style="left:445.0px;top:290px;font-size:12px;line-height:14px;color:#6d6d6d;font-weight:normal;letter-spacing:-0.230px;">4/2/2015 10:31 AM</div>
<div class="t" style="left:565.0px;top:290px;font-size:12px;line-height:14px;color:#6d6d6d;font-weight:normal;letter-spacing:0.018px;">Microsoft Word D...</div>
<div class="t" style="left:205.4px;top:311px;font-size:12px;line-height:14px;color:#000;font-weight:normal;letter-spacing:-0.239px;">Last_Name_FirstName_netid_original_file...</div>
<div class="t" style="left:445.0px;top:311px;font-size:12px;line-height:14px;color:#6d6d6d;font-weight:normal;letter-spacing:-0.230px;">4/2/2015 10:31 AM</div>
<div class="t" style="left:565.0px;top:311px;font-size:12px;line-height:14px;color:#6d6d6d;font-weight:normal;letter-spacing:0.018px;">Microsoft Word D...</div>
<div class="t" style="left:20.8px;top:543px;font-size:12px;line-height:14px;color:#1e395b;font-weight:normal;letter-spacing:-0.168px;">4 items</div>
<div class="t" style="left:80.5px;top:543px;font-size:12px;line-height:14px;color:#1e395b;font-weight:normal;letter-spacing:-0.263px;">4 items selected</div>
<div class="t" style="left:170.0px;top:543px;font-size:12px;line-height:14px;color:#1e395b;font-weight:normal;letter-spacing:-0.441px;">3.45 MB</div>
<div class="t" style="left:8.7px;top:567px;font-size:12px;line-height:14px;color:#000;font-weight:normal;letter-spacing:-0.312px;">4 items selected (Disk free space: 60.6 GB)</div><div class="a" style="left:451px;top:321px;width:169px;height:280px;background:#f0f0f0;border:1px solid #979797;box-shadow:2px 2px 2px rgba(0,0,0,0.35), 1px 1px 1px rgba(0,0,0,0.2);"></div>
<div class="a" style="left:481px;top:323px;width:1px;height:270px;background:#e2e3e3;"></div>
<div class="a" style="left:483px;top:415px;width:136px;height:1px;background:#d7d7d7;"></div>
<div class="a" style="left:483px;top:444px;width:136px;height:1px;background:#d7d7d7;"></div>
<div class="a" style="left:483px;top:473px;width:136px;height:1px;background:#d7d7d7;"></div>
<div class="a" style="left:483px;top:524px;width:136px;height:1px;background:#d7d7d7;"></div>

<svg width="692" height="590" style="left:0;top:0;"><path d="M606 426 L610.5 429.6 L606 433.2 Z" fill="#1a1a1a"/><path d="M606 455 L610.5 458.6 L606 462.2 Z" fill="#1a1a1a"/></svg>
<div class="t" style="left:486.0px;top:328px;font-size:12px;line-height:14px;color:#000;font-weight:bold;letter-spacing:-0.367px;">Open</div>
<div class="t" style="left:486.0px;top:350px;font-size:12px;line-height:14px;color:#000;font-weight:normal;letter-spacing:-0.344px;">Edit</div>
<div class="t" style="left:486.0px;top:372px;font-size:12px;line-height:14px;color:#000;font-weight:normal;letter-spacing:-0.269px;">New</div>
<div class="t" style="left:486.0px;top:394px;font-size:12px;line-height:14px;color:#000;font-weight:normal;letter-spacing:-0.035px;">Print</div>
<div class="t" style="left:486.0px;top:422.5px;font-size:12px;line-height:14px;color:#000;font-weight:normal;letter-spacing:-0.270px;">Share with</div>
<div class="t" style="left:486.0px;top:452px;font-size:12px;line-height:14px;color:#000;font-weight:normal;letter-spacing:-0.281px;">Send to</div>
<div class="t" style="left:486.0px;top:481px;font-size:12px;line-height:14px;color:#000;font-weight:normal;letter-spacing:-0.025px;">Cut</div>
<div class="t" style="left:486.0px;top:503px;font-size:12px;line-height:14px;color:#000;font-weight:normal;letter-spacing:-0.003px;">Copy</div>
<div class="t" style="left:486.0px;top:532px;font-size:12px;line-height:14px;color:#000;font-weight:normal;letter-spacing:-0.102px;">Create shortcut</div>
<div class="t" style="left:486.0px;top:554px;font-size:12px;line-height:14px;color:#000;font-weight:normal;letter-spacing:-0.315px;">Delete</div>
<div class="t" style="left:486.0px;top:576px;font-size:12px;line-height:14px;color:#000;font-weight:normal;letter-spacing:-0.443px;">Rename</div>
</body></html>
